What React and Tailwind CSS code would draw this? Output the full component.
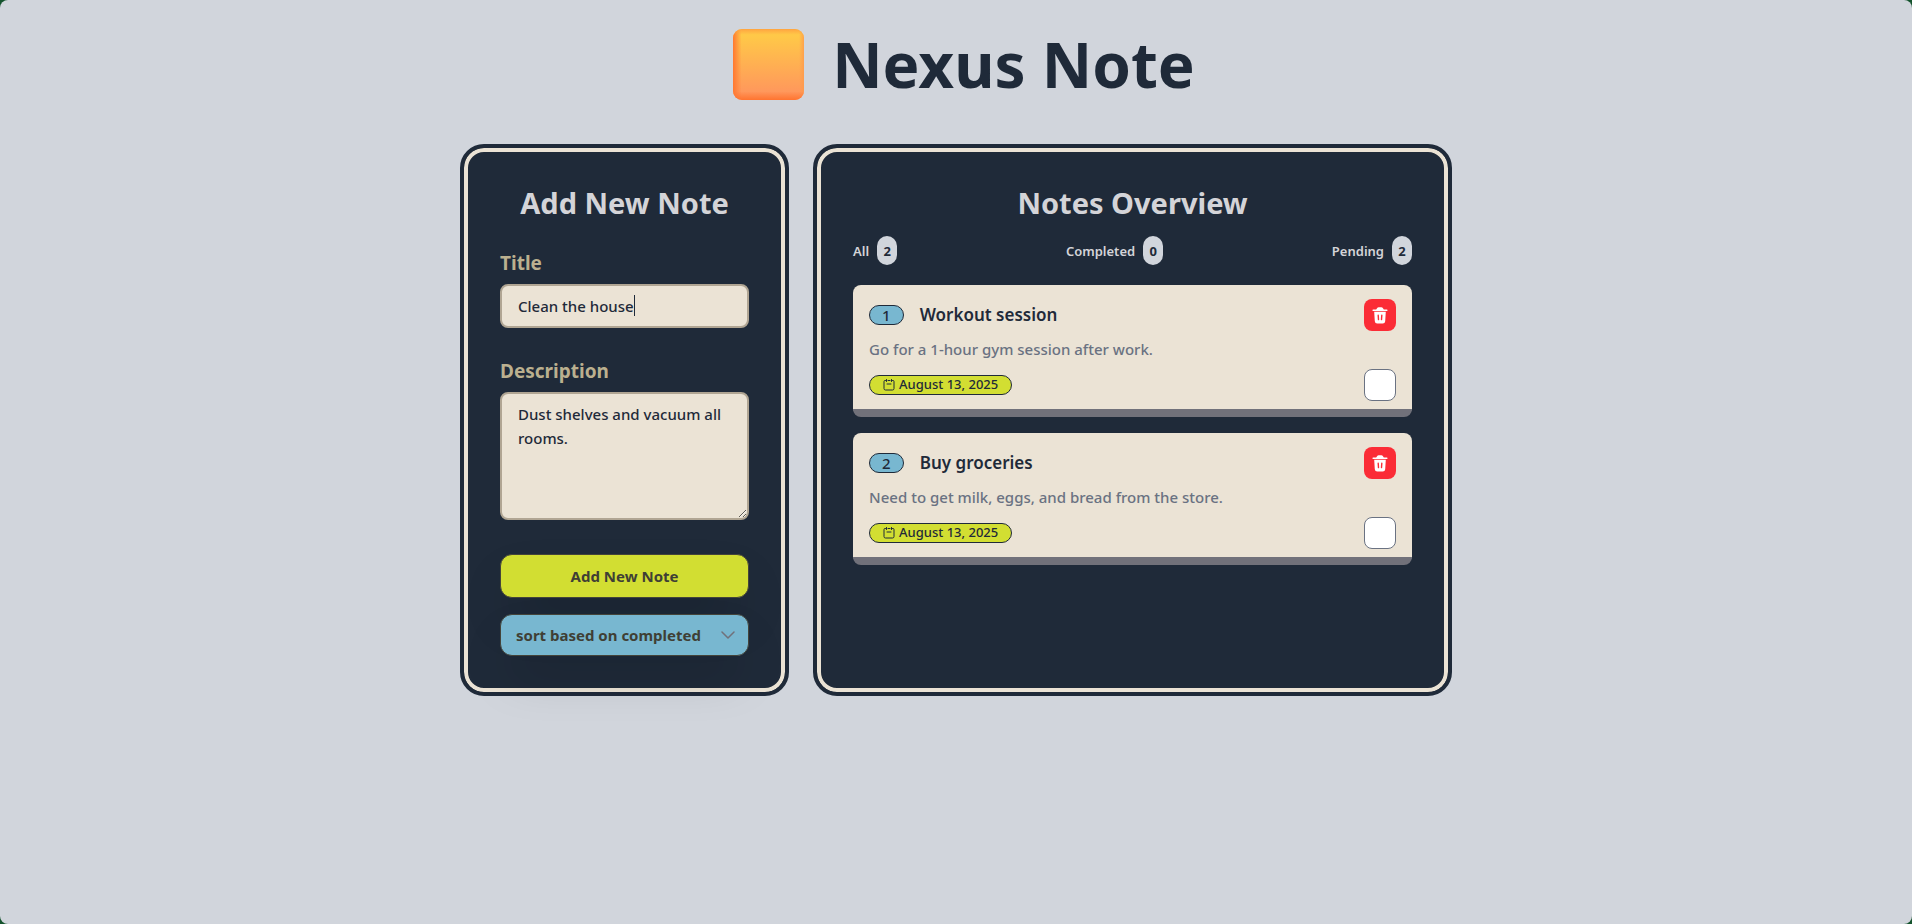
import { useState } from "react";

const NOTES = [
  { id: 1, title: "Workout session", text: "Go for a 1-hour gym session after work.", date: "August 13, 2025" },
  { id: 2, title: "Buy groceries", text: "Need to get milk, eggs, and bread from the store.", date: "August 13, 2025" },
];

function LogoSquare() {
  return (
    <svg viewBox="0 0 71 71" className="size-[71px] shrink-0" aria-hidden="true">
      <defs>
        <linearGradient id="face" x1="0" y1="0" x2="0" y2="1">
          <stop offset="0.1" stopColor="#ffc848" />
          <stop offset="0.9" stopColor="#ff975c" />
        </linearGradient>
        <linearGradient id="left" x1="0" y1="0" x2="1" y2="0">
          <stop offset="0" stopColor="#ff7830" />
          <stop offset="0.12" stopColor="#ff7830" stopOpacity="0" />
          <stop offset="0.93" stopColor="#ff9a4a" stopOpacity="0" />
          <stop offset="1" stopColor="#ff9a4a" stopOpacity="0.8" />
        </linearGradient>
        <linearGradient id="ends" x1="0" y1="0" x2="0" y2="1">
          <stop offset="0" stopColor="#ffa040" stopOpacity="0.9" />
          <stop offset="0.08" stopColor="#ffa040" stopOpacity="0" />
          <stop offset="0.88" stopColor="#ff7430" stopOpacity="0" />
          <stop offset="1" stopColor="#ff7430" />
        </linearGradient>
      </defs>
      <rect width="71" height="71" rx="9" fill="url(#face)" />
      <rect width="71" height="71" rx="9" fill="url(#left)" />
      <rect width="71" height="71" rx="9" fill="url(#ends)" />
    </svg>
  );
}

function TrashIcon() {
  return (
    <svg viewBox="0 0 16 18" className="h-[18px] w-4" fill="none" aria-hidden="true">
      <path d="M1.2 4.2h13.6" stroke="#fff" strokeWidth="1.6" strokeLinecap="round" />
      <path d="M4 4.4C4.4 2.6 5.4 1.2 6.6 1.2h2.8c1.2 0 2.2 1.4 2.6 3.2z" fill="#fff" />
      <path d="M2.2 5.8h11.6l-.6 9.4a2.4 2.4 0 0 1-2.4 2.2H5.2a2.4 2.4 0 0 1-2.4-2.2z" fill="#fff" />
      <path d="M6.2 9.2l.3 4.4M9.8 9.2l-.3 4.4" stroke="#fb2c36" strokeWidth="1.4" strokeLinecap="round" />
    </svg>
  );
}

function CalendarIcon() {
  return (
    <svg viewBox="0 0 12 12" className="size-3" fill="none" stroke="currentColor" strokeLinecap="round" strokeLinejoin="round" aria-hidden="true">
      <path d="M2.5 1.5H2a1 1 0 0 0-1 1v7A1.5 1.5 0 0 0 2.5 11h7A1.5 1.5 0 0 0 11 9.5v-7a1 1 0 0 0-1-1h-.5M5 1.5h2" />
      <path d="M3.500.5v2M8.500.5v2M4 5h4" />
    </svg>
  );
}

function Panel({ title, children }) {
  return (
    <section className="rounded-3xl border-4 border-[#1f2a39] bg-[#1f2a39] px-9 pt-[37px] pb-9 inset-ring-4 inset-ring-[#ebe3d5]">
      <h2 className="text-center text-[29px] leading-9 font-bold text-[#d4d4d8]">{title}</h2>
      {children}
    </section>
  );
}

function Counter({ label, count }) {
  return (
    <div className="flex items-center gap-2 text-[13px] leading-5 font-semibold text-[#d4d4d8]">
      <span>{label}</span>
      <span className="flex h-[29px] w-5 items-center justify-center rounded-full bg-[#d1d5dc] font-bold text-[#1f2a39]">{count}</span>
    </div>
  );
}

function Note({ note, onDelete }) {
  return (
    <li className="rounded-lg border-b-8 border-[#71717a] bg-[#ebe3d5] px-4 pt-[14px] pb-2">
      <div className="flex h-8 items-center justify-between">
        <div className="flex items-center gap-4">
          <span className="flex h-5 items-center rounded-full border border-[#1f2a39] bg-[#78b7d0] px-3 text-[15px] font-medium text-[#1f2a39]">{note.id}</span>
          <h3 className="text-[17px] leading-7 font-semibold text-[#1f2a39]">{note.title}</h3>
        </div>
        <button type="button" aria-label={"Delete " + note.title} onClick={onDelete} className="flex size-8 items-center justify-center rounded-lg bg-[#fb2c36]">
          <TrashIcon />
        </button>
      </div>
      <p className="mt-[6px] mb-2 text-[15px] leading-6 font-medium text-[#6a7282]">{note.text}</p>
      <div className="flex h-8 items-center justify-between">
        <span className="flex h-5 items-center gap-1 rounded-full border border-[#1f2a39] bg-[#d2de32] px-[13px] text-[13px] font-medium text-[#1f2a39]">
          <CalendarIcon />
          {note.date}
        </span>
        <input type="checkbox" aria-label={"Complete " + note.title} className="size-8 appearance-none rounded-lg border border-[#6a7282] bg-white checked:bg-[#78b7d0]" />
      </div>
    </li>
  );
}

export default function App() {
  const [notes, setNotes] = useState(NOTES);
  const [title, setTitle] = useState("Clean the house");
  const [text, setText] = useState("Dust shelves and vacuum all rooms.");

  return (
    <div className="min-h-screen bg-[#14532d] font-['Noto_Sans','Open_Sans',sans-serif]">
      <div className="min-h-screen rounded-lg bg-[#d1d5dc] pb-8">
        <header className="flex items-center justify-center gap-7 pt-7 pl-4">
          <LogoSquare />
          <h1 className="text-[62px] leading-[72px] font-bold text-[#1f2a39]">Nexus Note</h1>
        </header>
        <main className="mx-auto mt-11 grid max-w-5xl grid-cols-[34fr_66fr] gap-6 px-4">
          <Panel title="Add New Note">
            <form onSubmit={(e) => e.preventDefault()} className="flex flex-col">
              <label htmlFor="title" className="mt-7 text-[19px] leading-7 font-bold text-[#bbb08f]">Title</label>
              <div className="relative mt-[7px]">
                <input id="title" value={title} onChange={(e) => setTitle(e.target.value)} className="h-11 w-full rounded-lg border-2 border-[#b0a593] bg-[#ebe3d5] px-4 text-[15px] leading-6 font-medium text-[#1f2a39] outline-none" />
                <span className="absolute top-[11px] left-[134px] h-[21px] w-px bg-[#1f2a39]" aria-hidden="true" />
              </div>
              <label htmlFor="description" className="mt-[29px] text-[19px] leading-7 font-bold text-[#bbb08f]">Description</label>
              <textarea id="description" value={text} onChange={(e) => setText(e.target.value)} className="mt-[7px] h-32 w-full rounded-lg border-2 border-[#b0a593] bg-[#ebe3d5] px-4 py-2 text-[15px] leading-6 font-medium text-[#1f2a39] outline-none" />
              <button type="submit" className="mt-[34px] h-11 rounded-xl border border-[#44443a] bg-[#d2de32] text-[15px] font-bold text-[#3f3f35] shadow-2xl">Add New Note</button>
              <div className="relative mt-4">
                <select aria-label="Sort notes" className="h-[42px] w-full appearance-none rounded-xl border border-[#44443a] bg-[#78b7d0] pl-[15px] text-[15px] font-bold text-[#3f3f35] shadow-2xl">
                  <option>sort based on completed</option>
                  <option>sort based on date</option>
                </select>
                <svg viewBox="0 0 14 8" className="pointer-events-none absolute top-[17px] right-[14px] h-2 w-[14px]" fill="none" stroke="#71717a" strokeWidth="1.5" strokeLinecap="round" strokeLinejoin="round" aria-hidden="true">
                  <path d="M1 1l6 6 6-6" />
                </svg>
              </div>
            </form>
          </Panel>
          <Panel title="Notes Overview">
            <div className="mt-[15px] flex items-center justify-between">
              <Counter label="All" count={notes.length} />
              <Counter label="Completed" count={0} />
              <Counter label="Pending" count={notes.length} />
            </div>
            <ul className="mt-5 flex flex-col gap-4">
              {notes.map((note) => (
                <Note key={note.id} note={note} onDelete={() => setNotes(notes.filter((n) => n.id !== note.id))} />
              ))}
            </ul>
          </Panel>
        </main>
      </div>
    </div>
  );
}
